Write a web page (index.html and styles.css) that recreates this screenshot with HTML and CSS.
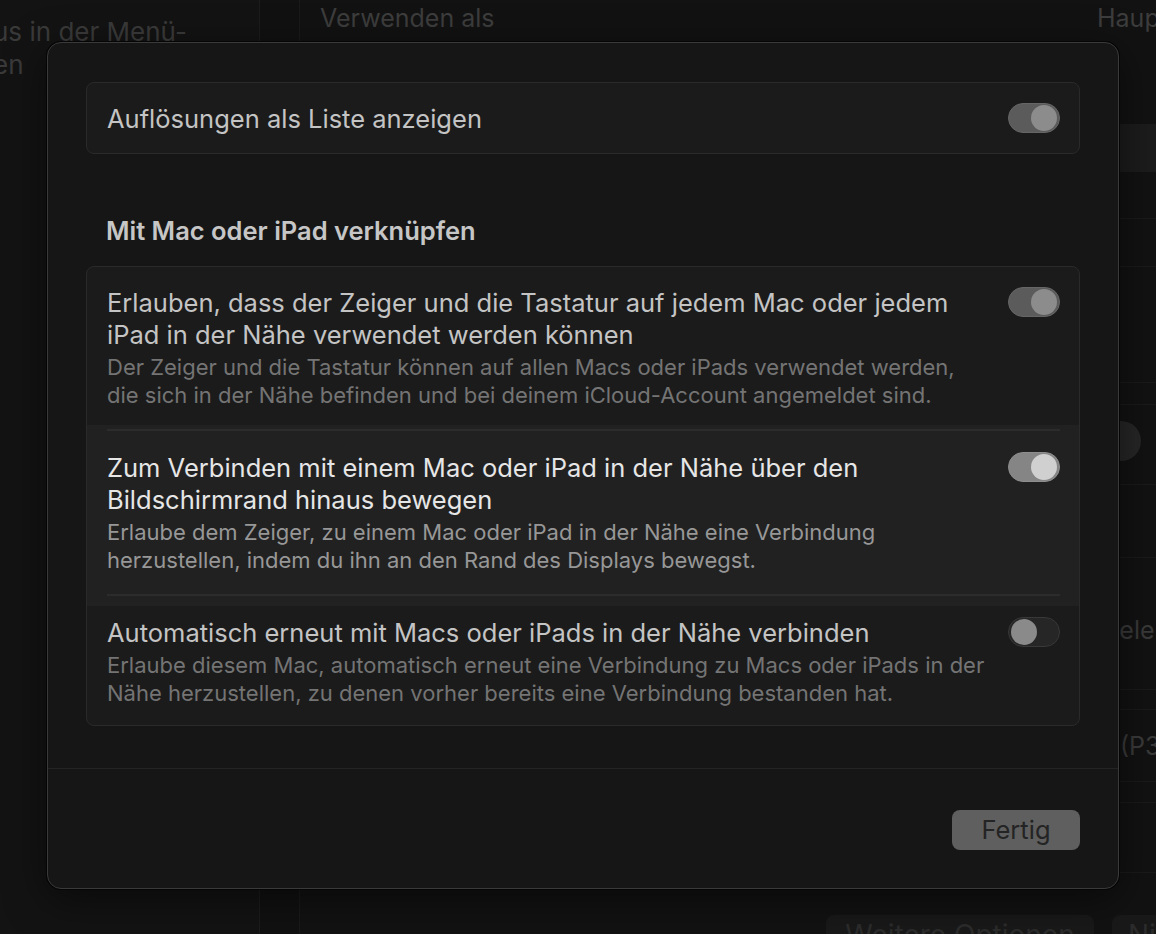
FILE: index.html
```
<!DOCTYPE html>
<html lang="de">

<head>
    <meta charset="UTF-8">
    <meta name="viewport" content="width=device-width, initial-scale=1.0">
    <title>Displays</title>
    <link rel="stylesheet" href="styles.css">
</head>

<body>
    <div class="window">
        <div class="sidebar">
            <p class="side_text">us in der Menü-<br>en</p>
        </div>
        <div class="gutter"></div>
        <div class="main">
            <div class="main_head">
                <span>Verwenden als</span>
                <span class="head_right">Hauptdisplay</span>
            </div>
            <div class="bg_list">
                <div class="bg_row bg_row_hl"></div>
                <div class="bg_row" style="height:47px"></div>
                <div class="bg_row" style="height:48px"></div>
                <div class="bg_row" style="height:116px"></div>
                <div class="bg_row" style="height:22px"></div>
                <div class="bg_row bg_slider" style="height:80px"><i class="knob"></i></div>
                <div class="bg_row" style="height:73px"></div>
                <div class="bg_row bg_text" style="height:132px"><span>Beleuchtung</span></div>
                <div class="bg_row" style="height:20px"></div>
                <div class="bg_row bg_text bg_p3" style="height:72px"><span>(P3</span></div>
                <div class="bg_row" style="height:21px"></div>
                <div class="bg_row" style="height:70px"></div>
            </div>
            <div class="bg_buttons">
                <span class="bg_btn">Weitere Optionen</span>
                <span class="bg_btn bg_btn_small">Nicht</span>
            </div>
        </div>
    </div>

    <div class="sheet">
        <div class="sheet_body">
            <div class="card card_single">
                <span class="label">Auflösungen als Liste anzeigen</span>
                <span class="toggle on dim"><i></i></span>
            </div>

            <h3 class="section">Mit Mac oder iPad verknüpfen</h3>

            <div class="card">
                <div class="row row_first">
                    <div class="texts">
                        <div class="title">Erlauben, dass der Zeiger und die Tastatur auf jedem Mac oder jedem<br>iPad in der Nähe verwendet werden können</div>
                        <div class="sub">Der Zeiger und die Tastatur können auf allen Macs oder iPads verwendet werden,<br>die sich in der Nähe befinden und bei deinem iCloud-Account angemeldet sind.</div>
                    </div>
                    <span class="toggle on dim"><i></i></span>
                </div>
                <div class="row row_active">
                    <div class="sep"></div>
                    <div class="row_inner">
                        <div class="texts">
                            <div class="title">Zum Verbinden mit einem Mac oder iPad in der Nähe über den<br>Bildschirmrand hinaus bewegen</div>
                            <div class="sub">Erlaube dem Zeiger, zu einem Mac oder iPad in der Nähe eine Verbindung<br>herzustellen, indem du ihn an den Rand des Displays bewegst.</div>
                        </div>
                        <span class="toggle on"><i></i></span>
                    </div>
                    <div class="sep"></div>
                </div>
                <div class="row row_last">
                    <div class="texts">
                        <div class="title">Automatisch erneut mit Macs oder iPads in der Nähe verbinden</div>
                        <div class="sub">Erlaube diesem Mac, automatisch erneut eine Verbindung zu Macs oder iPads in der<br>Nähe herzustellen, zu denen vorher bereits eine Verbindung bestanden hat.</div>
                    </div>
                    <span class="toggle"><i></i></span>
                </div>
            </div>
        </div>
        <div class="sheet_foot">
            <span class="btn">Fertig</span>
        </div>
    </div>
</body>

</html>
```

FILE: styles.css
```
* {
    box-sizing: border-box;
}

body {
    margin: 0;
    width: 1156px;
    height: 934px;
    overflow: hidden;
    position: relative;
    background: #0d0d0d;
    font-family: Inter, "Noto Sans", sans-serif;
    -webkit-font-smoothing: antialiased;
}

/* window behind the sheet */

.window {
    display: flex;
    height: 934px;
}

.sidebar {
    width: 260px;
    flex: none;
    background: #131313;
    border-right: 1px solid #1c1c1c;
    overflow: hidden;
}

.side_text {
    margin: 15px 0 0 -7px;
    font-size: 26px;
    line-height: 33px;
    color: #3a3a3a;
    white-space: nowrap;
}

.gutter {
    width: 40px;
    flex: none;
    background: #111;
    border-right: 1px solid #1a1a1a;
}

.main {
    flex: 1;
    background: #121212;
    display: flex;
    flex-direction: column;
    overflow: hidden;
}

.main > div {
    flex: none;
}

.main_head {
    display: flex;
    justify-content: space-between;
    padding: 3px 0 0 20px;
    height: 124px;
    font-size: 25px;
    color: #3d3d3d;
}

.head_right {
    flex: none;
    width: 59px;
    white-space: nowrap;
}

.bg_list {
    display: flex;
    flex-direction: column;
}

.bg_row {
    flex: none;
    border-bottom: 1px solid #1a1a1a;
    position: relative;
}

.bg_row_hl {
    height: 48px;
    background: #1c1c1c;
    border-bottom: 0;
}

.bg_slider .knob {
    position: absolute;
    left: 801px;
    top: 16px;
    width: 40px;
    height: 40px;
    border-radius: 50%;
    background: #262626;
}

.bg_text {
    display: flex;
    align-items: center;
    padding: 12px 0 0 803px;
    font-size: 25px;
    color: #3a3a3a;
    white-space: nowrap;
}

.bg_p3 {
    padding: 0 0 0 820px;
}

.bg_buttons {
    display: flex;
    justify-content: flex-end;
    gap: 18px;
    margin-top: 42px;
    margin-right: -36px;
}

.bg_btn {
    background: #191919;
    border-radius: 8px;
    width: 268px;
    height: 40px;
    padding-top: 3px;
    text-align: center;
    font-size: 28px;
    color: #2c2c2c;
    white-space: nowrap;
    overflow: hidden;
}

.bg_btn_small {
    width: 80px;
    text-align: left;
    padding-left: 16px;
}

/* sheet */

.sheet {
    position: absolute;
    left: 47px;
    top: 42px;
    width: 1072px;
    height: 847px;
    background: #161616;
    border: 1px solid #3a3a3a;
    border-radius: 14px;
    box-shadow: 0 0 0 1px #050505, 0 10px 40px rgba(0, 0, 0, 0.5);
    display: flex;
    flex-direction: column;
}

.sheet_body {
    padding: 39px 38px 0;
    height: 726px;
    border-bottom: 1px solid #242424;
}

.card {
    background: #1b1b1b;
    border: 1px solid #2a2a2a;
    border-radius: 8px;
    overflow: hidden;
}

.card_single {
    height: 72px;
    display: flex;
    align-items: center;
    justify-content: space-between;
    padding: 0 19px 0 20px;
}

.label {
    font-size: 25.5px;
    color: #c4c4c4;
}

.section {
    margin: 61px 0 19px 20px;
    font-size: 25.5px;
    line-height: 32px;
    font-weight: 600;
    color: #c6c6c6;
}

.row {
    display: flex;
    justify-content: space-between;
    align-items: flex-start;
}

.row_first {
    padding: 20px 19px 16px 20px;
}

.row_active {
    display: block;
    background: #212121;
    padding: 4px 0 10px;
}

.row_inner {
    display: flex;
    justify-content: space-between;
    align-items: flex-start;
    padding: 21px 19px 20px 20px;
}

.row_last {
    padding: 11px 19px 18px 20px;
}

.sep {
    height: 2px;
    margin: 0 19px 0 20px;
    background: #2c2c2c;
}

.texts {
    width: 900px;
    white-space: nowrap;
}

.title {
    font-size: 25.5px;
    line-height: 32px;
    color: #c4c4c4;
}

.sub {
    padding-top: 2px;
    font-size: 22px;
    line-height: 28px;
    color: #747474;
}

.row_active .title {
    color: #e6e6e6;
}

.row_active .sub {
    color: #979797;
}

.toggle {
    flex: none;
    width: 52px;
    height: 30px;
    border-radius: 15px;
    background: #262626;
    border: 1px solid #383838;
    display: flex;
    align-items: center;
    padding: 0 2px;
}

.toggle i {
    width: 26px;
    height: 26px;
    border-radius: 50%;
    background: #8a8a8a;
}

.toggle.on {
    justify-content: flex-end;
    background: #858585;
    border-color: #8e8e8e;
}

.toggle.on i {
    background: #d0d0d0;
}

.toggle.dim {
    background: #5b5b5b;
    border-color: #666;
}

.toggle.dim i {
    background: #8c8c8c;
}

.sheet_foot {
    flex: 1;
    display: flex;
    justify-content: flex-end;
    align-items: flex-start;
    padding: 41px 38px 0 0;
}

.btn {
    width: 128px;
    height: 40px;
    border-radius: 8px;
    background: #5f5f5f;
    color: #242424;
    font-size: 25.5px;
    text-align: center;
    line-height: 40px;
}
```
